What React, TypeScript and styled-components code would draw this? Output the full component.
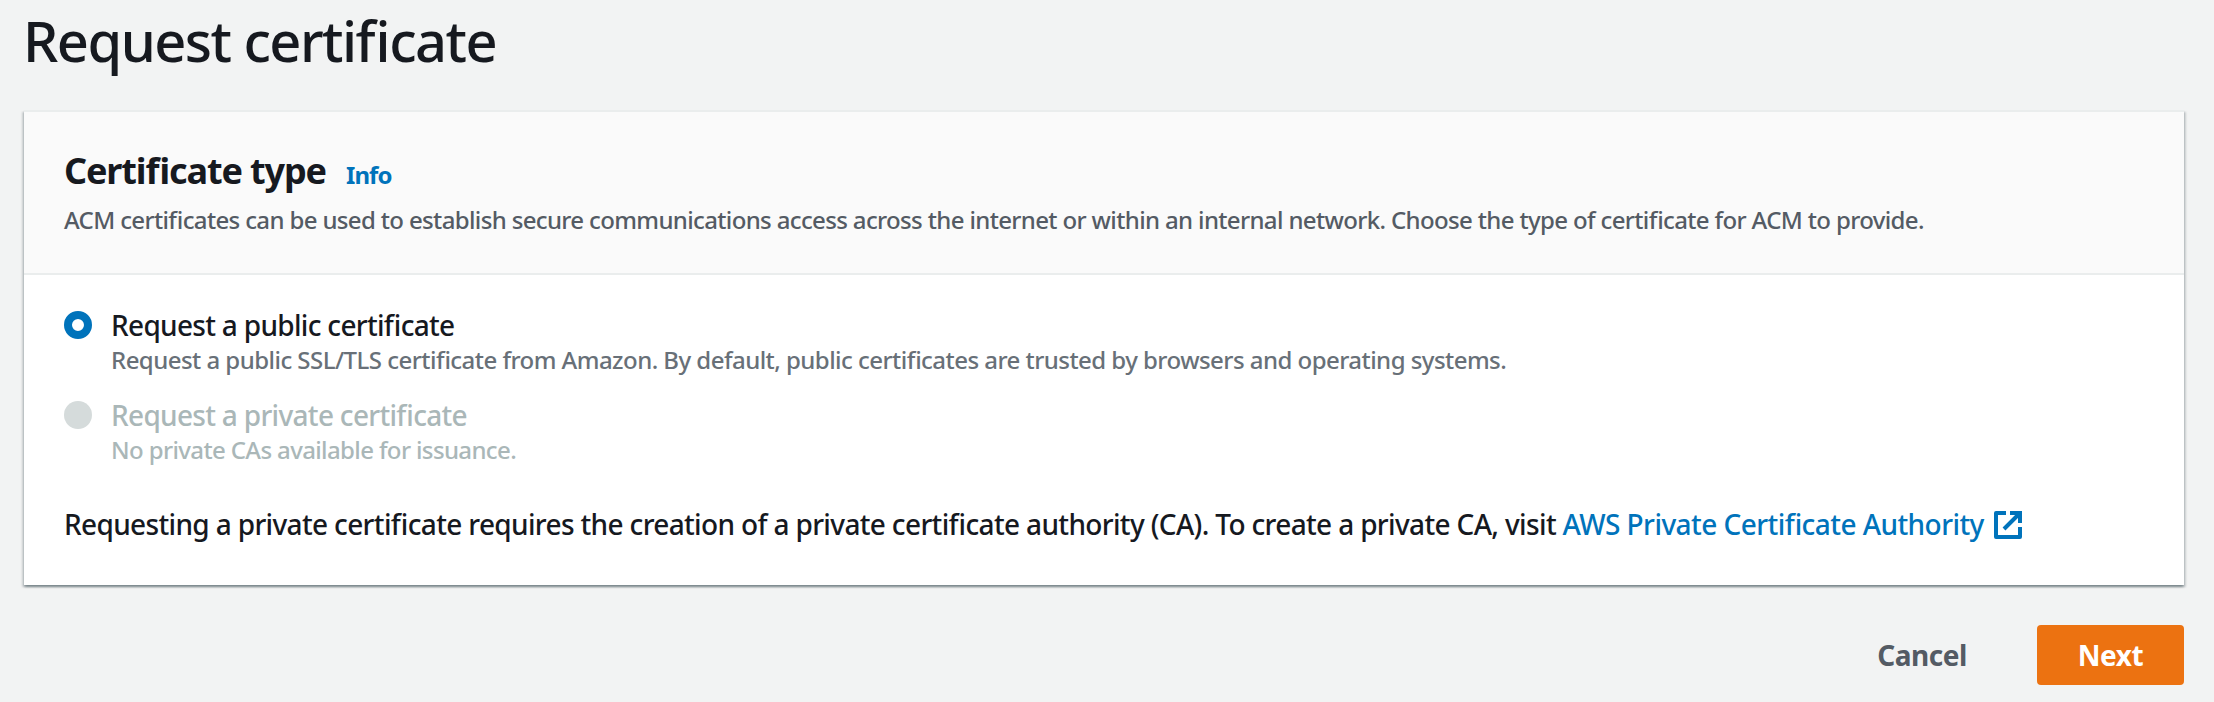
import React from "react";
import styled, { createGlobalStyle } from "styled-components";

const GlobalStyle = createGlobalStyle`
  *, *::before, *::after { box-sizing: border-box; }
  body {
    margin: 0;
    background: #f2f3f3;
    color: #16191f;
    font-family: "Noto Sans", "Open Sans", sans-serif;
    font-feature-settings: "liga" 1;
    font-weight: 500;
    font-size: 28px;
  }
`;

const Page = styled.main`
  display: flex;
  flex-direction: column;
  height: 702px;
  padding: 10px 30px 17px 24px;
`;

const PageTitle = styled.h1`
  margin: 0 0 40px -1px;
  font-size: 56px;
  line-height: 60px;
  font-weight: 500;
  letter-spacing: -1.54px;
`;

const Card = styled.section`
  background: #fff;
  border-top: 2px solid #eaeded;
  box-shadow:
    0 2px 2px 0 rgba(0, 28, 36, 0.3),
    2px 2px 2px 0 rgba(0, 28, 36, 0.15),
    -2px 2px 2px 0 rgba(0, 28, 36, 0.15);
`;

const CardHeader = styled.header`
  height: 163px;
  padding: 37px 40px 0;
  background: #fafafa;
  border-bottom: 2px solid #eaeded;
`;

const HeadingRow = styled.div`
  display: flex;
  align-items: baseline;
  gap: 20px;
`;

const Heading = styled.h2`
  margin: 0;
  font-size: 36px;
  line-height: 44px;
  font-weight: 700;
  letter-spacing: -1.12px;
`;

const InfoLink = styled.a`
  color: #0073bb;
  font-size: 24px;
  font-weight: 700;
  line-height: 36px;
  letter-spacing: -0.9px;
`;

const Description = styled.p`
  margin: 9px 0 0;
  color: #545b64;
  font-size: 24px;
  line-height: 36px;
  letter-spacing: -0.645px;
  white-space: nowrap;
`;

const CardBody = styled.div`
  height: 310px;
  padding: 29px 40px 0;
`;

const Options = styled.div`
  display: flex;
  flex-direction: column;
  gap: 20px;
`;

const Option = styled.label`
  display: flex;
  gap: 19px;
`;

const Radio = styled.span<{ $disabled?: boolean }>`
  flex: none;
  width: 28px;
  height: 28px;
  margin-top: 7px;
  border-radius: 50%;
  background: ${(p) => (p.$disabled ? "#d5dbdb" : "#fff")};
  border: ${(p) => (p.$disabled ? "0" : "8px solid #0073bb")};
`;

const OptionText = styled.span`
  display: flex;
  flex-direction: column;
`;

const OptionLabel = styled.span<{ $disabled?: boolean }>`
  line-height: 42px;
  letter-spacing: -0.69px;
  color: ${(p) => (p.$disabled ? "#aab7b8" : "#16191f")};
`;

const OptionHint = styled.span<{ $disabled?: boolean }>`
  font-size: 24px;
  line-height: 28px;
  letter-spacing: ${(p) => (p.$disabled ? "-0.63px" : "-0.54px")};
  color: ${(p) => (p.$disabled ? "#aab7b8" : "#687078")};
`;

const Note = styled.p`
  display: flex;
  margin: 38px 0 0;
  line-height: 44px;
  letter-spacing: -0.65px;
  white-space: pre;
`;

const ExternalLink = styled.a`
  display: flex;
  align-items: center;
  gap: 10px;
  color: #0073bb;
  letter-spacing: -0.56px;
`;

const Icon = styled.svg`
  width: 28px;
  height: 28px;
  margin-top: 2px;
`;

const Actions = styled.footer`
  display: flex;
  justify-content: flex-end;
  gap: 30px;
  margin-top: 40px;
`;

const Button = styled.button<{ $primary?: boolean }>`
  height: 60px;
  width: ${(p) => (p.$primary ? "147px" : "170px")};
  padding: 0 0 1px;
  border: 0;
  border-radius: 4px;
  background: ${(p) => (p.$primary ? "#ec7211" : "transparent")};
  color: ${(p) => (p.$primary ? "#fff" : "#545b64")};
  font: inherit;
  font-weight: 700;
  letter-spacing: -0.5px;
`;

export default function App() {
  return (
    <>
      <GlobalStyle />
      <Page>
        <PageTitle>Request certificate</PageTitle>
        <Card>
          <CardHeader>
            <HeadingRow>
              <Heading>Certificate type</Heading>
              <InfoLink>Info</InfoLink>
            </HeadingRow>
            <Description>
              ACM certificates can be used to establish secure communications access across the internet or within an
              internal network. Choose the type of certificate for ACM to provide.
            </Description>
          </CardHeader>
          <CardBody>
            <Options>
              <Option>
                <Radio />
                <OptionText>
                  <OptionLabel>Request a public certificate</OptionLabel>
                  <OptionHint>
                    Request a public SSL/TLS certificate from Amazon. By default, public certificates are trusted by
                    browsers and operating systems.
                  </OptionHint>
                </OptionText>
              </Option>
              <Option>
                <Radio $disabled />
                <OptionText>
                  <OptionLabel $disabled>Request a private certificate</OptionLabel>
                  <OptionHint $disabled>No private CAs available for issuance.</OptionHint>
                </OptionText>
              </Option>
            </Options>
            <Note>
              {"Requesting a private certificate requires the creation of a private certificate authority (CA). To create a private CA, visit "}
              <ExternalLink>
                AWS Private Certificate Authority
                <Icon viewBox="1 1 14 14" fill="none" stroke="currentColor" strokeWidth="2">
                  <path d="M9 2h5v5M6 10l8-8" />
                  <path strokeLinejoin="round" d="M14 9.048V14H2V2h5" />
                </Icon>
              </ExternalLink>
            </Note>
          </CardBody>
        </Card>
        <Actions>
          <Button>Cancel</Button>
          <Button $primary>Next</Button>
        </Actions>
      </Page>
    </>
  );
}
